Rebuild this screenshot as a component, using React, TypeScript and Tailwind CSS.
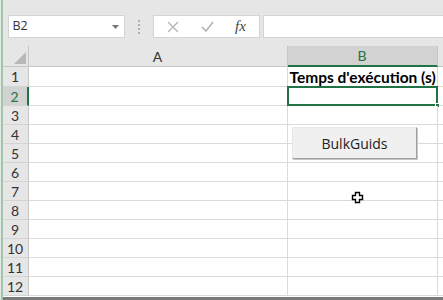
const rows = [1, 2, 3, 4, 5, 6, 7, 8, 9, 10, 11, 12]

function NameBox() {
  return (
    <div className="ml-[5px] flex h-[23px] w-[117px] items-center justify-between border border-[#d4d4d4] bg-white pl-[4px] pr-[5px]">
      <span className="text-[12.5px] text-[#333]" style={{ fontFamily: '"Open Sans", sans-serif' }}>B2</span>
      <svg width="7" height="4" viewBox="0 0 7 4"><path d="M0 0h7L3.5 4z" fill="#777" /></svg>
    </div>
  )
}

function FormulaButtons() {
  return (
    <div className="flex h-[23px] w-[107px] items-center border border-[#d4d4d4] bg-white">
      <div className="flex w-[36px] justify-center pl-[3px]">
        <svg width="12" height="12" viewBox="0 0 12 12"><path d="M1 1l10 10M11 1L1 11" stroke="#b4b4b4" strokeWidth="1.3" /></svg>
      </div>
      <div className="flex w-[36px] justify-center">
        <svg width="13" height="11" viewBox="0 0 13 11"><path d="M1 6l4 4L12 1" stroke="#b4b4b4" strokeWidth="1.6" fill="none" /></svg>
      </div>
      <div className="flex w-[30px] justify-center">
        <span className="text-[15px] italic text-[#444]" style={{ fontFamily: '"Liberation Serif", serif' }}>fx</span>
      </div>
    </div>
  )
}

export default function App() {
  return (
    <div className="relative flex h-[300px] w-[443px] overflow-hidden bg-[#e6e6e6]">
      {/* left edge */}
      <div className="w-px bg-[#e6e6e6]" />
      <div className="w-[1.5px] bg-[#9fc8aa]" />

      <div className="flex flex-1 flex-col">
        {/* toolbar */}
        <div className="flex h-[46px] items-start pt-[15px]">
          <NameBox />
          <div className="mx-[13px] mt-[5px] flex flex-col gap-[2px]">
            <div className="h-[2px] w-[2px] bg-[#b0b0b0]" />
            <div className="h-[2px] w-[2px] bg-[#b0b0b0]" />
            <div className="h-[2px] w-[2px] bg-[#b0b0b0]" />
            <div className="h-[2px] w-[2px] bg-[#b0b0b0]" />
          </div>
          <FormulaButtons />
          <div className="ml-[3px] h-[23px] flex-1 border border-r-0 border-[#d4d4d4] bg-white" />
        </div>

        {/* column headers */}
        <div className="flex h-[21px] text-[14px] text-[#333]" style={{ fontFamily: 'Lato, sans-serif' }}>
          <div className="flex w-[26px] items-end justify-end border-r border-b border-[#c6c6c6] pb-[2px] pr-[2px]">
            <svg width="12" height="12" viewBox="0 0 12 12"><path d="M12 0v12H0z" fill="#b8b8b8" /></svg>
          </div>
          <div className="flex w-[259px] items-center justify-center border-r border-b border-[#c6c6c6]">A</div>
          <div className="flex w-[150px] items-center justify-center border-r border-b-2 border-r-[#c6c6c6] border-b-[#217346] bg-[#d2d2d2] text-[#217346]">B</div>
          <div className="flex-1 border-b border-[#c6c6c6]" />
        </div>

        {/* grid */}
        {rows.map(r => {
          const h = r === 1 ? 'h-[20px]' : 'h-[19px]'
          const sel = r === 2
          return (
            <div key={r} className={`flex ${h}`} style={{ fontFamily: 'Lato, sans-serif' }}>
              <div
                className={`flex w-[26px] items-center justify-center border-b border-[#d4d4d4] text-[14px] ${sel ? 'border-r-2 border-r-[#217346] bg-[#d2d2d2] text-[#217346]' : 'border-r border-r-[#c6c6c6] text-[#333]'}`}
              >
                {r}
              </div>
              <div className="w-[259px] border-r border-b border-[#dadada] bg-white" />
              <div className="relative flex w-[150px] items-end border-r border-b border-[#dadada] bg-white pl-[2px]">
                {r === 1 && (
                  <span className="pb-px text-[15.5px] font-bold leading-none text-black">Temps d'exécution (s)</span>
                )}
                {sel && (
                  <div className="absolute -left-px -top-px h-[20px] w-[151px] border-2 border-[#217346]">
                    <div className="absolute -bottom-[4px] -right-[4px] h-[5px] w-[5px] border border-white bg-[#217346]" />
                  </div>
                )}
              </div>
              <div className="flex-1 border-b border-[#dadada] bg-white" />
            </div>
          )
        })}
        <div className="h-px bg-white" />
        <div className="h-[3px] bg-[#7a7a7a]" />
      </div>

      {/* form button */}
      <div
        className="absolute left-[292px] top-[127px] flex h-[32px] w-[125px] items-center justify-center border border-[#e8e8e8] border-r-[#a0a0a0] border-b-[#a0a0a0] bg-[#f0f0f0] text-[14px] text-[#222] shadow-[1px_1px_0_#c8c8c8]"
        style={{ fontFamily: '"Open Sans", sans-serif' }}
      >
        BulkGuids
      </div>

      {/* cell cursor */}
      <svg className="absolute left-[351px] top-[191px]" width="13" height="13" viewBox="0 0 13 13">
        <path d="M4.5 1.5h4v3h3v4h-3v3h-4v-3h-3v-4h3z" fill="white" stroke="black" strokeWidth="1.4" />
      </svg>
    </div>
  )
}
